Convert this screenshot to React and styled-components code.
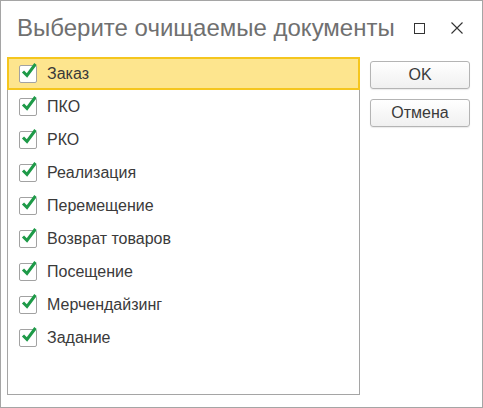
import React, { useState } from 'react';
import styled, { createGlobalStyle } from 'styled-components';

const GlobalStyle = createGlobalStyle`
  html, body {
    margin: 0;
    padding: 0;
    background: #fff;
  }
  body {
    font-family: "Liberation Sans", Arial, sans-serif;
  }
`;

const Window = styled.div`
  box-sizing: border-box;
  width: 483px;
  height: 408px;
  border: 1px solid #a5a5a5;
  background: #fff;
  display: flex;
  flex-direction: column;
`;

const TitleBar = styled.div`
  height: 54px;
  display: flex;
  align-items: center;
  padding: 0 0 0 16px;
`;

const Title = styled.h1`
  flex: 1;
  margin: 0;
  font-size: 24px;
  font-weight: normal;
  color: #707070;
  white-space: nowrap;
`;

const TitleButton = styled.button`
  width: 30px;
  height: 30px;
  border: none;
  background: none;
  padding: 0;
  display: flex;
  align-items: center;
  justify-content: center;
  margin-right: ${(p) => p.$gap || 0}px;
`;

const Body = styled.div`
  flex: 1;
  display: flex;
  padding: 2px 12px 12px 6px;
  gap: 10px;
`;

const List = styled.div`
  box-sizing: border-box;
  width: 353px;
  height: 338px;
  border: 1px solid #a5a5a5;
  display: flex;
  flex-direction: column;
`;

const Row = styled.label`
  box-sizing: border-box;
  height: 33.1px;
  display: flex;
  align-items: center;
  gap: 10px;
  padding-left: ${(p) => (p.$active ? 10 : 11)}px;
  background: ${(p) => (p.$active ? '#fde58e' : 'transparent')};
  border: ${(p) => (p.$active ? '2px solid #f5c61e' : 'none')};
  margin: ${(p) => (p.$active ? '-1px -1px 0 -1px' : '0')};
  font-size: 16px;
  color: #3a3a3a;
  cursor: default;
`;

const Box = styled.span`
  box-sizing: border-box;
  position: relative;
  width: 18px;
  height: 18px;
  border: 1px solid #a2a2a2;
  border-radius: 2px;
  background: #fff;
  flex-shrink: 0;
`;

const Tick = styled.svg`
  position: absolute;
  left: 1px;
  top: -4px;
`;

const Side = styled.div`
  display: flex;
  flex-direction: column;
  gap: 10px;
  padding-top: 4px;
`;

const Button = styled.button`
  box-sizing: border-box;
  width: 100px;
  height: 28px;
  border: 1px solid #b4b4b4;
  border-radius: 3px;
  background: linear-gradient(#ffffff, #f0f0f0);
  box-shadow: 0 1px 1px rgba(0, 0, 0, 0.08);
  font-family: "Liberation Sans", Arial, sans-serif;
  font-size: 16px;
  color: #3a3a3a;
  padding: 0;
`;

const items = [
  'Заказ',
  'ПКО',
  'РКО',
  'Реализация',
  'Перемещение',
  'Возврат товаров',
  'Посещение',
  'Мерчендайзинг',
  'Задание',
];

const Check = () => (
  <Box>
    <Tick width="17" height="17" viewBox="0 0 17 17">
      <path d="M2 9.5 L6 13.5 L14.5 2" fill="none" stroke="#1e9a48" strokeWidth="3" strokeLinecap="butt" />
    </Tick>
  </Box>
);

export default function App() {
  const [active] = useState(0);
  return (
    <>
      <GlobalStyle />
      <Window>
        <TitleBar>
          <Title>Выберите очищаемые документы</Title>
          <TitleButton $gap={8} aria-label="maximize">
            <svg width="11" height="11" viewBox="0 0 11 11">
              <rect x="0.5" y="0.5" width="10" height="10" fill="none" stroke="#333" strokeWidth="1" />
            </svg>
          </TitleButton>
          <TitleButton $gap={10} aria-label="close">
            <svg width="12" height="12" viewBox="0 0 12 12">
              <path d="M0.5 0.5 L11.5 11.5 M11.5 0.5 L0.5 11.5" stroke="#333" strokeWidth="1.1" />
            </svg>
          </TitleButton>
        </TitleBar>
        <Body>
          <List>
            {items.map((t, i) => (
              <Row key={t} $active={i === active}>
                <Check />
                {t}
              </Row>
            ))}
          </List>
          <Side>
            <Button>OK</Button>
            <Button>Отмена</Button>
          </Side>
        </Body>
      </Window>
    </>
  );
}
